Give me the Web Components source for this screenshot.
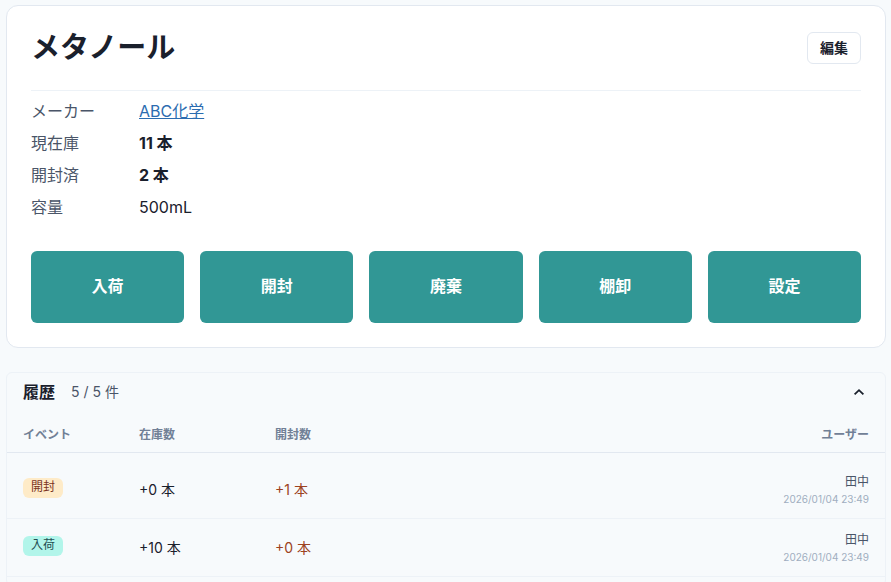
<!DOCTYPE html>
<html lang="ja">
<head>
<meta charset="UTF-8">
<meta name="viewport" content="width=device-width, initial-scale=1">
<title>メタノール</title>
<style>
  body {
    margin: 0;
    padding: 5px 5px 0 6px;
    background-color: #f7fafc;
    color: #1a202c;
    font-family: Inter, "Noto Sans CJK JP", sans-serif;
    font-size: 16px;
    line-height: 24px;
  }
</style>
</head>
<body>
  <reagent-card nombre="メタノール">
    <reagent-field label="メーカー"><a href="#maker">ABC化学</a></reagent-field>
    <reagent-field label="現在庫"><b>11 本</b></reagent-field>
    <reagent-field label="開封済"><b>2 本</b></reagent-field>
    <reagent-field label="容量">500mL</reagent-field>
    <action-button slot="actions">入荷</action-button>
    <action-button slot="actions">開封</action-button>
    <action-button slot="actions">廃棄</action-button>
    <action-button slot="actions">棚卸</action-button>
    <action-button slot="actions">設定</action-button>
  </reagent-card>
  <history-panel></history-panel>

<script>
class ReagentCard extends HTMLElement {
  constructor() {
    super();
    this.attachShadow({ mode: 'open' });
  }

  connectedCallback() {
    const nombre = this.getAttribute('nombre');

    this.shadowRoot.innerHTML = `
    <style>
      :host {
        display: block;
        padding: 24px;
        background-color: #fff;
        border: 1px solid #e2e8f0;
        border-radius: 12px;
      }
      header {
        display: flex;
        justify-content: space-between;
        align-items: center;
        padding-bottom: 24px;
        border-bottom: 1px solid #edf2f7;
      }
      h1 {
        margin: 0;
        font-size: 29px;
        line-height: 36px;
        font-weight: 700;
      }
      button {
        height: 32px;
        padding: 0 12px;
        border: 1px solid #e2e8f0;
        border-radius: 6px;
        background-color: #fff;
        color: inherit;
        font: inherit;
        font-size: 14px;
        font-weight: 600;
        cursor: pointer;
      }
      .fields {
        display: flex;
        flex-direction: column;
        gap: 8px;
        padding: 8px 0 32px;
      }
      .actions {
        display: flex;
        gap: 16px;
      }
    </style>
    <header>
      <h1>${nombre}</h1>
      <button type="button">編集</button>
    </header>
    <div class="fields"><slot></slot></div>
    <div class="actions"><slot name="actions"></slot></div>
    `;
  }
}

class ReagentField extends HTMLElement {
  constructor() {
    super();
    this.attachShadow({ mode: 'open' });
  }

  connectedCallback() {
    this.shadowRoot.innerHTML = `
    <style>
      :host {
        display: flex;
      }
      .label {
        flex: 0 0 108px;
        color: #4a5568;
      }
      ::slotted(a) {
        color: #2b6cb0;
        text-decoration: underline;
      }
      ::slotted(b) {
        font-weight: 700;
      }
    </style>
    <span class="label">${this.getAttribute('label')}</span>
    <span><slot></slot></span>
    `;
  }
}

class ActionButton extends HTMLElement {
  constructor() {
    super();
    this.attachShadow({ mode: 'open' });
    this.shadowRoot.innerHTML = `
    <style>
      :host {
        display: block;
        flex: 1;
      }
      button {
        width: 100%;
        height: 72px;
        padding: 0 16px 2px;
        border: none;
        border-radius: 6px;
        background-color: #319795;
        color: #fff;
        font: inherit;
        font-weight: 600;
        cursor: pointer;
      }
    </style>
    <button type="button"><slot></slot></button>
    `;
  }
}

class EventBadge extends HTMLElement {
  constructor() {
    super();
    this.attachShadow({ mode: 'open' });
    this.shadowRoot.innerHTML = `
    <style>
      :host {
        display: block;
        width: fit-content;
        padding: 0 8px 2px;
        border-radius: 6px;
        background-color: #feebc8;
        color: #7b341e;
        font-size: 12px;
        line-height: 18px;
      }
      :host([tipo="in"]) {
        background-color: #b2f5ea;
        color: #234e52;
      }
    </style>
    <slot></slot>
    `;
  }
}

class HistoryPanel extends HTMLElement {
  constructor() {
    super();
    this.attachShadow({ mode: 'open' });
    this.rows = [
      { tipo: 'open', evento: '開封', stock: '+0 本', opened: '+1 本', user: '田中', date: '2026/01/04 23:49' },
      { tipo: 'in', evento: '入荷', stock: '+10 本', opened: '+0 本', user: '田中', date: '2026/01/04 23:49' },
    ];
  }

  connectedCallback() {
    const rows = this.rows.map((r) => `
      <tr>
        <td><event-badge tipo="${r.tipo}">${r.evento}</event-badge></td>
        <td>${r.stock}</td>
        <td class="opened">${r.opened}</td>
        <td class="user">${r.user}<time>${r.date}</time></td>
      </tr>`).join('');

    this.shadowRoot.innerHTML = `
    <style>
      :host {
        display: block;
        margin-top: 24px;
        padding-bottom: 8px;
        border: 1px solid #edf2f7;
        border-radius: 6px;
      }
      header {
        display: flex;
        align-items: center;
        gap: 16px;
        padding: 7px 16px;
      }
      h2 {
        margin: 0;
        font-size: 16px;
        font-weight: 700;
      }
      .count {
        color: #4a5568;
        font-size: 14px;
      }
      .toggle {
        display: flex;
        margin-left: auto;
        padding: 0;
        border: none;
        background: none;
        color: inherit;
        cursor: pointer;
      }
      svg {
        width: 20px;
        height: 20px;
      }
      table {
        width: 100%;
        border-collapse: separate;
        border-spacing: 0;
        table-layout: fixed;
        font-size: 14px;
      }
      th {
        padding: 15px 16px 8px 0;
        border-bottom: 1px solid #e2e8f0;
        color: #718096;
        font-size: 12px;
        line-height: 18px;
        font-weight: 600;
        text-align: left;
      }
      td {
        padding: 12px 16px 11px 0;
        border-bottom: 1px solid #edf2f7;
        line-height: 18px;
        vertical-align: middle;
      }
      tbody tr:first-child td {
        padding-top: 20px;
      }
      th:first-child {
        width: 116px;
      }
      th:first-child, td:first-child {
        padding-left: 16px;
        padding-right: 0;
      }
      td:first-child {
        padding-bottom: 15px;
      }
      th:nth-child(2) {
        width: 120px;
      }
      .opened {
        color: #9c4221;
      }
      th:last-child, .user {
        text-align: right;
      }
      .user {
        color: #4a5568;
        font-size: 12px;
      }
      time {
        display: block;
        color: #a0aec0;
        font-size: 10px;
        line-height: 16px;
      }
    </style>
    <header>
      <h2>履歴</h2>
      <span class="count">5 / 5 件</span>
      <button class="toggle" type="button" aria-label="履歴を閉じる" aria-expanded="true">
        <svg viewBox="0 0 20 20" fill="none" stroke="currentColor" stroke-width="1.8"><path d="M5.6 12.4 10 8.2l4.4 4.2"/></svg>
      </button>
    </header>
    <table>
      <thead>
        <tr><th>イベント</th><th>在庫数</th><th>開封数</th><th>ユーザー</th></tr>
      </thead>
      <tbody>${rows}</tbody>
    </table>
    `;
  }
}

customElements.define('reagent-card', ReagentCard);
customElements.define('reagent-field', ReagentField);
customElements.define('action-button', ActionButton);
customElements.define('event-badge', EventBadge);
customElements.define('history-panel', HistoryPanel);
</script>
</body>
</html>
